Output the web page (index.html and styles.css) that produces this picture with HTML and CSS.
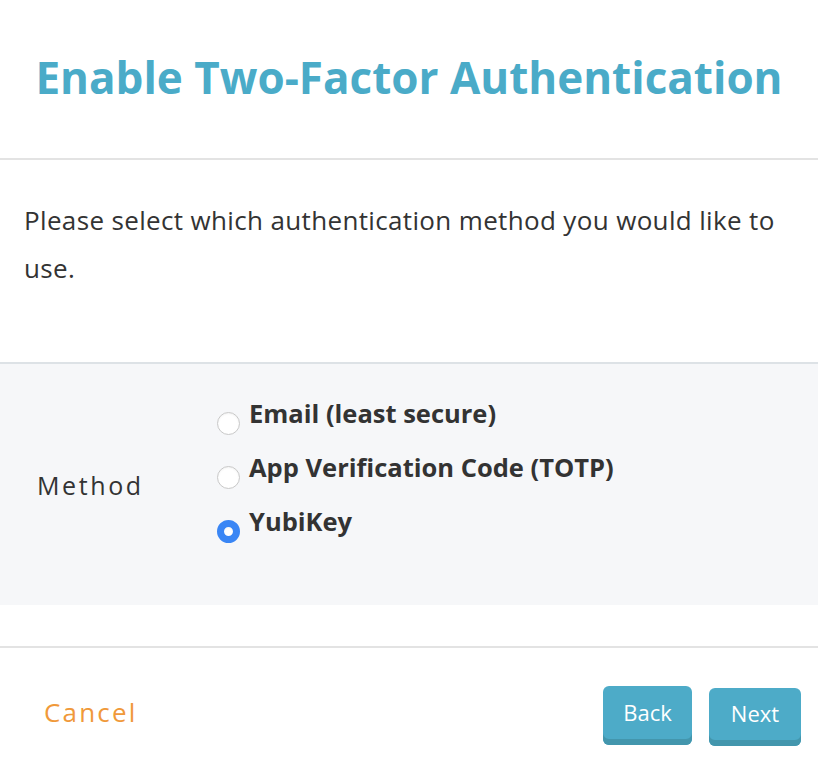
FILE: index.html
```html
<!DOCTYPE html>
<html>
<head>
    <link rel="stylesheet" href="styles.css">
</head>
<body>
    <div class="modal">
        <div class="modal-header">
            <h1>Enable Two-Factor Authentication</h1>
        </div>
        <div class="modal-body">
            <p>Please select which authentication method you would like to use.</p>
        </div>
        <div class="form-section">
            <div class="form-label">Method</div>
            <div class="options">
                <label class="option"><input type="radio" name="method" value="email"><span>Email (least secure)</span></label>
                <label class="option"><input type="radio" name="method" value="totp"><span>App Verification Code (TOTP)</span></label>
                <label class="option"><input type="radio" name="method" value="yubikey" checked><span>YubiKey</span></label>
            </div>
        </div>
        <div class="modal-footer">
            <a class="cancel" href="#">Cancel</a>
            <div class="buttons">
                <button class="btn btn-back">Back</button>
                <button class="btn btn-next">Next</button>
            </div>
        </div>
    </div>
</body>
</html>
```

FILE: styles.css
```css
body {
    margin: 0;
    font-family: "Open Sans", "Noto Sans", sans-serif;
    background-color: #fff;
    color: #333;
}
.modal {
    width: 818px;
}
.modal-header {
    height: 158px;
    border-bottom: 2px solid #e3e3e3;
    display: flex;
    justify-content: center;
    align-items: center;
}
.modal-header h1 {
    margin: 0;
    color: #4aabc8;
    font-size: 44px;
    font-weight: bold;
    padding-bottom: 4px;
}
.modal-body {
    height: 202px;
    padding: 0 24px;
    box-sizing: border-box;
}
.modal-body p {
    margin: 0;
    padding-top: 36px;
    max-width: 760px;
    font-size: 26px;
    letter-spacing: 0.35px;
    line-height: 48px;
}
.form-section {
    height: 243px;
    box-sizing: border-box;
    background-color: #f6f7f9;
    border-top: 2px solid #dde2e6;
    display: flex;
    align-items: center;
}
.form-label {
    width: 180px;
    padding-left: 37px;
    box-sizing: border-box;
    font-size: 25px;
    letter-spacing: 2.6px;
    font-weight: 500;
    color: #333;
}
.options {
    display: flex;
    flex-direction: column;
    gap: 12px;
    padding-left: 37px;
    margin-bottom: 25px;
}
.option {
    display: flex;
    align-items: center;
    font-size: 25.5px;
    font-weight: bold;
    color: #333;
    height: 42px;
}
.option input {
    width: 23px;
    height: 23px;
    margin: 10px 9px 0 0;
    appearance: none;
    border: 1px solid #c8c8c8;
    border-radius: 50%;
    background: #fff;
    box-shadow: inset 0 1px 2px rgba(0, 0, 0, 0.05);
}
.option input:checked {
    border: 7px solid #3a86f5;
}
.option span {
    margin-top: -10px;
}
.modal-footer {
    margin-top: 41px;
    border-top: 2px solid #e3e3e3;
    height: 118px;
    box-sizing: border-box;
    display: flex;
    justify-content: space-between;
    align-items: flex-start;
    padding: 38px 17px 0 44px;
}
.cancel {
    margin-top: 8px;
    color: #f0993a;
    font-size: 26px;
    line-height: 36px;
    text-decoration: none;
    letter-spacing: 2.2px;
}
.buttons {
    display: flex;
    gap: 17px;
    align-items: flex-start;
}
.btn {
    background-color: #4dabc8;
    color: white;
    border: none;
    font-family: "Open Sans", sans-serif;
    font-size: 22px;
    border-radius: 6px;
    box-shadow: inset 0 -6px 0 #4396ad;
    cursor: pointer;
    padding: 0 0 8px;
}
.btn-back {
    width: 89px;
    height: 59px;
}
.btn-next {
    width: 92px;
    height: 58px;
    margin-top: 2px;
}
.btn:hover {
    background-color: #3f9bb8;
}
```
